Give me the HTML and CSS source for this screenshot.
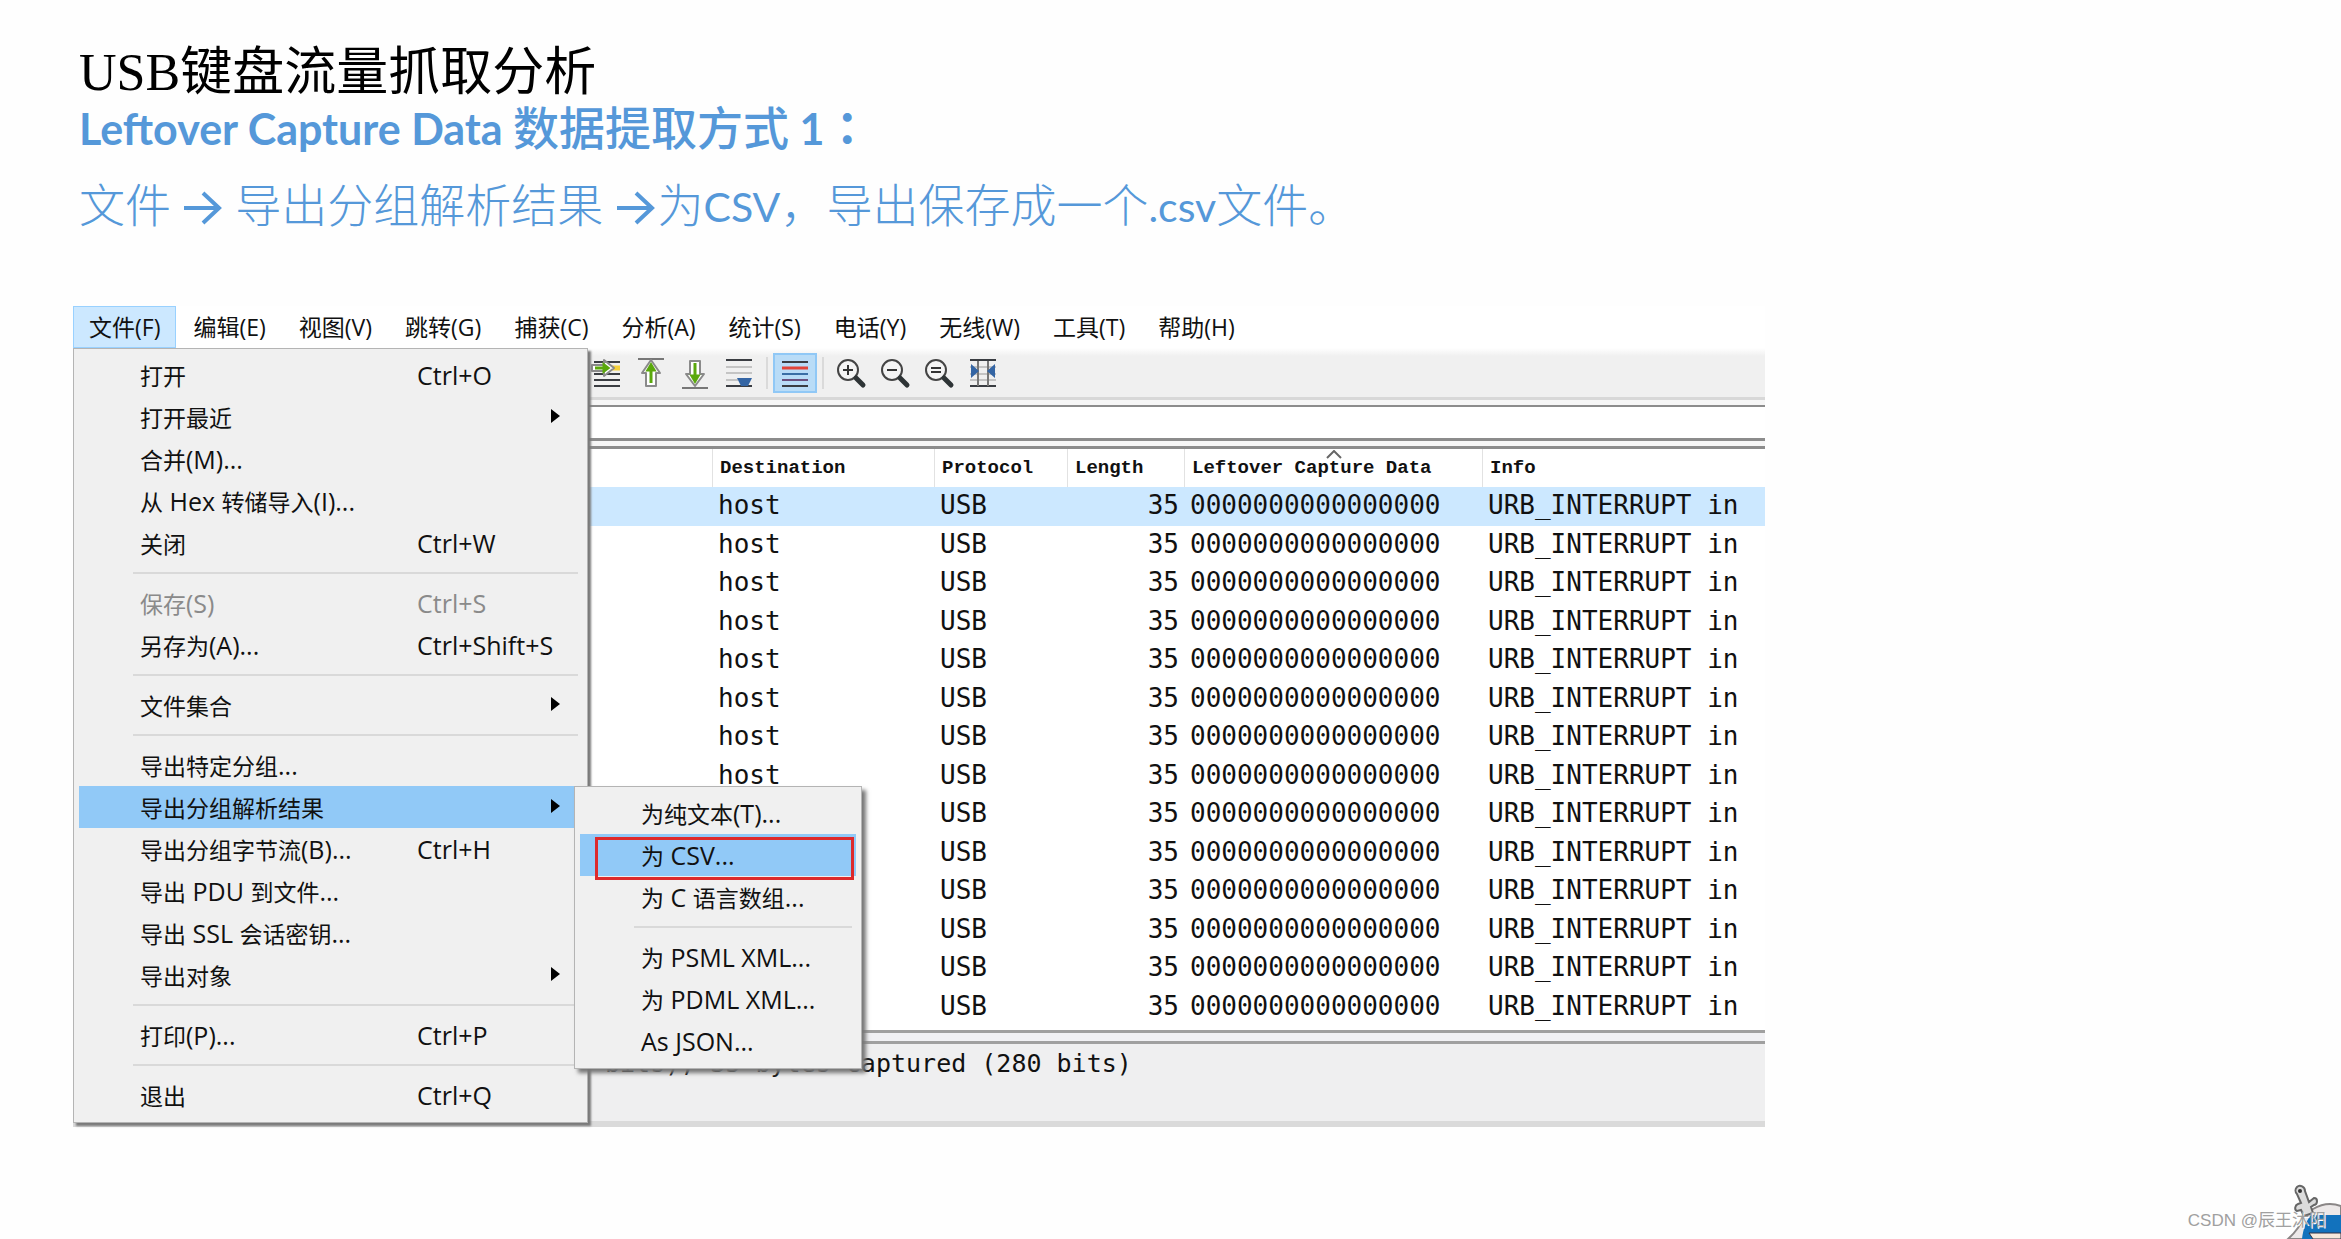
FILE: index.html
```html
<!DOCTYPE html>
<html lang="zh-CN">
<head>
<meta charset="utf-8">
<title>USB键盘流量抓取分析</title>
<link rel="stylesheet" href="styles.css">
</head>
<body>
<main class="slide">
  <header class="intro">
    <h1 class="title">USB键盘流量抓取分析</h1>
    <h2 class="subtitle"><span class="latin">Leftover Capture Data</span> 数据提取方式 <span class="latin">1</span><span class="colon" lang="zh-TW">：</span></h2>
    <p class="steps">文件 <svg class="arrow" viewBox="0 0 38 34"><path d="M0 17H35M19 2L35 17L19 32"/></svg> 导出分组解析结果 <svg class="arrow" viewBox="0 0 38 34"><path d="M0 17H35M19 2L35 17L19 32"/></svg>为<span class="latin">CSV</span>，导出保存成一个<span class="latin">.csv</span>文件。</p>
  </header>

  <section class="window">
    <nav class="menubar">
      <button class="menubar-item open">文件(F)</button>
      <button class="menubar-item">编辑(E)</button>
      <button class="menubar-item">视图(V)</button>
      <button class="menubar-item">跳转(G)</button>
      <button class="menubar-item">捕获(C)</button>
      <button class="menubar-item">分析(A)</button>
      <button class="menubar-item">统计(S)</button>
      <button class="menubar-item">电话(Y)</button>
      <button class="menubar-item">无线(W)</button>
      <button class="menubar-item">工具(T)</button>
      <button class="menubar-item">帮助(H)</button>
    </nav>

    <div class="toolbar">
      <button class="tool" aria-label="转到分组"><svg viewBox="0 0 32 32"><path class="ink" d="M3 5h26M3 17h26M3 23h26M3 29h26"/><path class="mark" d="M18 11h11"/><path class="halo" d="M1 8h12V3l10 8-10 8v-5H1z"/><path class="go" d="M4 11h12M13 8l4 3-4 3z"/></svg></button>
      <button class="tool" aria-label="首个分组"><svg viewBox="0 0 32 32"><path class="edge" d="M3 2h26"/><path class="halo" d="M16 3l9 13h-4v13H11V16H7z"/><path class="go" d="M16 26V12M13 13l3-5 3 5z"/></svg></button>
      <button class="tool" aria-label="末个分组"><svg viewBox="0 0 32 32"><path class="edge" d="M3 31h26"/><path class="halo" d="M16 29l9-12h-4V4H11v13H7z"/><path class="go" d="M16 6v14M13 19l3 5 3-5z"/></svg></button>
      <button class="tool" aria-label="自动滚动"><svg viewBox="0 0 32 32"><path class="ink" d="M3 3h26M3 29h26"/><path class="faint" d="M3 10h26M3 16h26M3 23h12"/><path class="blue" d="M14 21h15l-4 8h-7z"/></svg></button>
      <span class="tool-gap"></span>
      <button class="tool checked" aria-label="分组着色"><svg viewBox="0 0 32 32"><path class="ink" d="M3 5h26M3 29h26"/><path class="row-red" d="M3 11h26"/><path class="row-blue" d="M3 17h26"/><path class="row-violet" d="M3 23h26"/></svg></button>
      <span class="tool-gap"></span>
      <button class="tool" aria-label="放大"><svg viewBox="0 0 32 32"><circle class="lens" cx="13" cy="13" r="10"/><path class="handle" d="M21 21l7 7"/><path class="sign" d="M8 13h10M13 8v10"/></svg></button>
      <button class="tool" aria-label="缩小"><svg viewBox="0 0 32 32"><circle class="lens" cx="13" cy="13" r="10"/><path class="handle" d="M21 21l7 7"/><path class="sign" d="M8 13h10"/></svg></button>
      <button class="tool" aria-label="普通大小"><svg viewBox="0 0 32 32"><circle class="lens" cx="13" cy="13" r="10"/><path class="handle" d="M21 21l7 7"/><path class="sign" d="M8 11h10M8 15h10"/></svg></button>
      <button class="tool" aria-label="调整列宽"><svg viewBox="0 0 32 32"><path class="faint" d="M3 10h26M3 17h26M3 23h26"/><path class="ink" d="M3 3h26M3 29h26"/><path class="edge" d="M11 4v25M21 4v25"/><path class="blue" d="M4 7l8 7-8 7zM28 7l-8 7 8 7z"/></svg></button>
    </div>

    <div class="filter"><input class="filter-input" type="text" aria-label="显示过滤器"></div>

    <div class="packets">
      <table class="packet-table">
        <colgroup><col class="c-source"><col class="c-dest"><col class="c-proto"><col class="c-len"><col class="c-data"><col class="c-info"></colgroup>
        <thead>
          <tr><th></th><th>Destination</th><th>Protocol</th><th>Length</th><th class="sorted">Leftover Capture Data<svg class="sort" viewBox="0 0 16 9"><path d="M1 8l7-7 7 7"/></svg></th><th>Info</th></tr>
        </thead>
        <tbody>
          <tr class="selected"><td></td><td>host</td><td>USB</td><td class="num">35</td><td>0000000000000000</td><td>URB_INTERRUPT in</td></tr>
          <tr><td></td><td>host</td><td>USB</td><td class="num">35</td><td>0000000000000000</td><td>URB_INTERRUPT in</td></tr>
          <tr><td></td><td>host</td><td>USB</td><td class="num">35</td><td>0000000000000000</td><td>URB_INTERRUPT in</td></tr>
          <tr><td></td><td>host</td><td>USB</td><td class="num">35</td><td>0000000000000000</td><td>URB_INTERRUPT in</td></tr>
          <tr><td></td><td>host</td><td>USB</td><td class="num">35</td><td>0000000000000000</td><td>URB_INTERRUPT in</td></tr>
          <tr><td></td><td>host</td><td>USB</td><td class="num">35</td><td>0000000000000000</td><td>URB_INTERRUPT in</td></tr>
          <tr><td></td><td>host</td><td>USB</td><td class="num">35</td><td>0000000000000000</td><td>URB_INTERRUPT in</td></tr>
          <tr><td></td><td>host</td><td>USB</td><td class="num">35</td><td>0000000000000000</td><td>URB_INTERRUPT in</td></tr>
          <tr><td></td><td></td><td>USB</td><td class="num">35</td><td>0000000000000000</td><td>URB_INTERRUPT in</td></tr>
          <tr><td></td><td></td><td>USB</td><td class="num">35</td><td>0000000000000000</td><td>URB_INTERRUPT in</td></tr>
          <tr><td></td><td></td><td>USB</td><td class="num">35</td><td>0000000000000000</td><td>URB_INTERRUPT in</td></tr>
          <tr><td></td><td></td><td>USB</td><td class="num">35</td><td>0000000000000000</td><td>URB_INTERRUPT in</td></tr>
          <tr><td></td><td></td><td>USB</td><td class="num">35</td><td>0000000000000000</td><td>URB_INTERRUPT in</td></tr>
          <tr><td></td><td></td><td>USB</td><td class="num">35</td><td>0000000000000000</td><td>URB_INTERRUPT in</td></tr>
        </tbody>
      </table>
    </div>
    <div class="splitter"></div>
    <div class="details">bits), 35 bytes captured (280 bits)</div>

    <div class="menu file-menu">
      <button class="item">打开<kbd>Ctrl+O</kbd></button>
      <button class="item sub">打开最近</button>
      <button class="item">合并<span class="en">(M)...</span></button>
      <button class="item">从<span class="en"> Hex </span>转储导入<span class="en">(I)...</span></button>
      <button class="item">关闭<kbd>Ctrl+W</kbd></button>
      <hr class="rule">
      <button class="item" disabled>保存<span class="en">(S)</span><kbd>Ctrl+S</kbd></button>
      <button class="item">另存为<span class="en">(A)...</span><kbd>Ctrl+Shift+S</kbd></button>
      <hr class="rule">
      <button class="item sub">文件集合</button>
      <hr class="rule">
      <button class="item">导出特定分组<span class="en">...</span></button>
      <button class="item sub active">导出分组解析结果</button>
      <button class="item">导出分组字节流<span class="en">(B)...</span><kbd>Ctrl+H</kbd></button>
      <button class="item">导出<span class="en"> PDU </span>到文件<span class="en">...</span></button>
      <button class="item">导出<span class="en"> SSL </span>会话密钥<span class="en">...</span></button>
      <button class="item sub">导出对象</button>
      <hr class="rule">
      <button class="item">打印<span class="en">(P)...</span><kbd>Ctrl+P</kbd></button>
      <hr class="rule">
      <button class="item">退出<kbd>Ctrl+Q</kbd></button>
    </div>

    <div class="menu export-menu">
      <button class="item">为纯文本<span class="en">(T)...</span></button>
      <button class="item active marked">为<span class="en"> CSV...</span></button>
      <button class="item">为<span class="en"> C </span>语言数组<span class="en">...</span></button>
      <hr class="rule">
      <button class="item">为<span class="en"> PSML XML...</span></button>
      <button class="item">为<span class="en"> PDML XML...</span></button>
      <button class="item"><span class="en">As JSON...</span></button>
    </div>
  </section>
</main>

<svg class="mascot" viewBox="0 0 56 56"><path d="M3 56C12 48 16 42 20 32L28 26C38 20 48 20 56 23V56z" fill="#ece8e8" stroke="#8a8686" stroke-width="2"/><path d="M17 56C18 46 21 38 26 32H56V56z" fill="#1272bd"/><path d="M24 50H56V56H28z" fill="#f7e9dc" stroke="#334" stroke-width="1"/><path d="M12 4C15 1 20 4 20 8L24 19L29 15C33 15 33 21 29 22L26 24L28 30L19 33L16 27L12 28C9 27 10 22 13 21L16 20L12 11C10 9 10 6 12 4z" fill="#dcdcdc" stroke="#666" stroke-width="2"/><circle cx="15" cy="8" r="2" fill="#333"/></svg>
<footer class="watermark">CSDN @辰王沐阳</footer>
</body>
</html>
```
FILE: styles.css
```css
* { box-sizing: border-box; }

body {
  margin: 0;
  min-height: 100vh;
  background: #fefefe;
  color: #111;
  font-family: "Open Sans", "Noto Sans CJK SC", sans-serif;
  position: relative;
}

button {
  font: inherit;
  color: inherit;
  border: 0;
  background: none;
  padding: 0;
}

.slide { padding: 41px 24px 100px 73px; }

.intro { padding-left: 6px; }
.title {
  margin: 0;
  font: 400 52px/64px "Liberation Serif", "Noto Sans CJK SC", serif;
  color: #000;
}
.subtitle, .steps {
  margin: 0;
  color: #5598d9;
  font-family: "Noto Sans CJK SC", sans-serif;
  font-size: 46px;
  white-space: nowrap;
}
.subtitle { line-height: 40px; font-weight: 500; }
.subtitle .latin { font-size: 43px; font-weight: 700; }
.colon { font-family: "Noto Sans CJK TC", sans-serif; font-weight: 700; }
.steps { line-height: 68px; padding-top: 19px; font-weight: 300; }
.latin { font-family: Lato, sans-serif; font-size: 41px; }
.steps .latin { font-weight: 400; }
.arrow {
  width: 38px;
  height: 34px;
  margin: 0 3px;
  vertical-align: -3px;
  fill: none;
  stroke: #5598d9;
  stroke-width: 4;
}

.window {
  position: relative;
  max-width: 1692px;
  margin-top: 65px;
  background: #fff;
}

.menubar { display: flex; gap: 1px; height: 42px; }
.menubar-item {
  padding: 0 15px;
  font-size: 23px;
  line-height: 40px;
  border: 1px solid transparent;
}
.menubar-item.open { background: #cce8ff; border-color: #99d1ff; }

.toolbar {
  display: flex;
  align-items: center;
  height: 52px;
  padding: 1px 0 0 512px;
  background: linear-gradient(#fff, #f0f0f0 8px);
  border-bottom: 3px solid #d8d8d8;
}
.tool {
  display: grid;
  place-items: center;
  width: 44px;
  height: 40px;
}
.tool svg { width: 32px; height: 32px; fill: none; }
.tool.checked { background: #b9dcf7; border: 2px solid #90c8f6; }
.tool-gap {
  width: 2px;
  height: 32px;
  margin: 0 5px;
  background: #dadada;
}
.ink { stroke: #3a3d42; stroke-width: 2; }
.edge { stroke: #777; stroke-width: 2; }
.faint { stroke: #c4c4c4; stroke-width: 2; }
.mark { stroke: #f4d03c; stroke-width: 5; }
.blue { fill: #3465a4; }
.row-red { stroke: #e0453a; stroke-width: 3; }
.row-blue { stroke: #3a6ea5; stroke-width: 2; }
.row-violet { stroke: #6b4f7c; stroke-width: 2; }
.halo { fill: #fff; stroke: #8a8a8a; stroke-width: 2; stroke-linejoin: round; }
.go { fill: #5aa80c; stroke: #5aa80c; stroke-width: 3; }
.lens { fill: #f4f4f4; stroke: #444; stroke-width: 2; }
.handle { stroke: #2e3436; stroke-width: 5; stroke-linecap: round; }
.sign { stroke: #333; stroke-width: 2; }

.filter {
  padding: 5px 0;
  background: #f6f6f6;
}
.filter-input {
  display: block;
  width: 100%;
  height: 36px;
  border: solid #8c8c8c;
  border-width: 2px 0 3px;
  background: #fff;
}

.packets {
  border-top: 3px solid #8c8c8c;
  border-bottom: 3px solid #a0a0a0;
  padding-bottom: 4px;
}
.packet-table {
  width: 100%;
  height: 577px;
  table-layout: fixed;
  border-collapse: separate;
  border-spacing: 0;
  font: 26px/36px "DejaVu Sans Mono", monospace;
}
.c-source { width: 639px; }
.c-dest { width: 222px; }
.c-proto { width: 133px; }
.c-len { width: 117px; }
.c-data { width: 298px; }
.packet-table th {
  height: 38px;
  padding: 0 0 0 7px;
  text-align: left;
  font: 700 19px/38px "Liberation Mono", monospace;
  border-left: 1px solid #e2e2e2;
  white-space: nowrap;
}
.packet-table td { padding: 0 0 2px 6px; white-space: nowrap; }
.packet-table .num { text-align: right; padding-right: 5px; }
.selected { background: #cce8ff; }
.sorted { position: relative; }
.sort {
  position: absolute;
  top: 1px;
  left: 50%;
  width: 16px;
  height: 9px;
  margin-left: -8px;
  fill: none;
  stroke: #666;
  stroke-width: 2;
}

.splitter { height: 8px; background: #f1f1f4; }
.details {
  height: 86px;
  padding: 2px 0 0 532px;
  background: #efeff0;
  border-top: 3px solid #a0a0a0;
  border-bottom: 6px solid #dadada;
  font: 25px/36px "DejaVu Sans Mono", monospace;
  white-space: nowrap;
}

.menu {
  position: absolute;
  display: flex;
  flex-direction: column;
  padding: 5px 5px 6px;
  background: #f0f0f0;
  border: 1px solid #b4b4b4;
  font-size: 23px;
}
.file-menu {
  top: 42px;
  left: 0;
  width: 515px;
  box-shadow: 3px 3px 2px #7a7a7a;
}
.export-menu {
  top: 480px;
  left: 501px;
  width: 288px;
  box-shadow: 4px 4px 4px #777;
}
.item {
  position: relative;
  display: flex;
  flex: none;
  align-items: center;
  height: 42px;
  padding-left: 61px;
  text-align: left;
  white-space: pre;
}
.en { font-size: 25px; }
.item:disabled { color: #8a8a8a; }
.item.active { background: #91c9f7; }
.item kbd {
  position: absolute;
  left: 338px;
  font: 25px/42px "Open Sans", sans-serif;
}
.item.sub::after {
  content: "";
  position: absolute;
  right: 22px;
  top: 13px;
  border: solid transparent;
  border-width: 7px 0 7px 9px;
  border-left-color: #000;
}
.marked::before {
  content: "";
  position: absolute;
  inset: 3px 2px -4px 15px;
  border: 3px solid #dd2a2c;
}
.rule {
  flex: none;
  width: auto;
  height: 2px;
  margin: 8px 4px 8px 54px;
  border: 0;
  background: #d9d9d9;
}

.mascot {
  position: absolute;
  right: 0;
  bottom: 0;
  width: 56px;
  height: 56px;
}
.watermark {
  position: absolute;
  right: 15px;
  bottom: 6px;
  color: #a0a0a0;
  font: 17px/24px "Liberation Sans", "Noto Sans CJK SC", sans-serif;
  text-shadow: 1px 1px 0 #fff;
}
```
